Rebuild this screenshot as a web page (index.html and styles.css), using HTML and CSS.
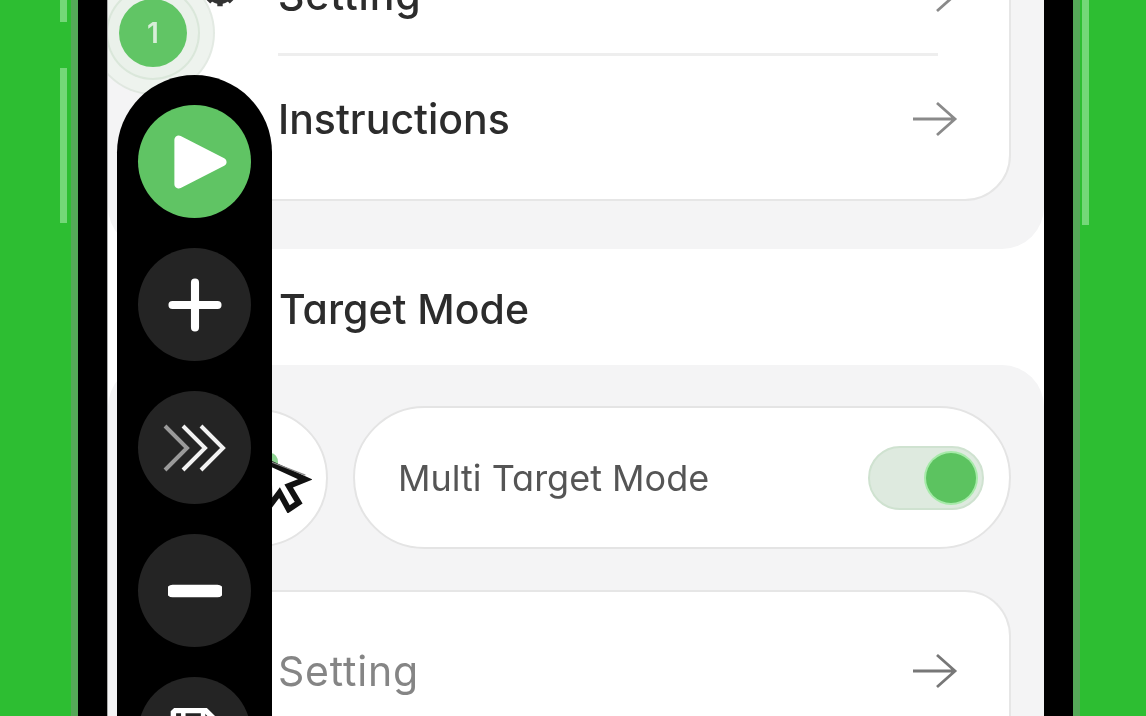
FILE: index.html
```html
<!DOCTYPE html>
<html lang="en">
<head>
<meta charset="utf-8">
<title>Target Mode</title>
<link rel="stylesheet" href="styles.css">
</head>
<body>
<div class="phone">
  <span class="side side-left-a"></span>
  <span class="side side-left-b"></span>
  <span class="side side-right"></span>
  <main class="screen">
    <section class="panel panel-top">
      <div class="card">
        <div class="row row-divided">
          <svg class="gear" viewBox="0 0 40 40"><circle cx="20" cy="20" r="12" fill="none" stroke="#333" stroke-width="7"/><path d="M20 2v8M20 30v8M2 20h8M30 20h8M7 7l6 6M27 27l6 6M33 7l-6 6M13 27l-6 6" stroke="#333" stroke-width="6"/></svg>
          <span class="label label-setting">Setting</span>
          <svg class="arrow" viewBox="0 0 46 36"><path d="M1 18h42M25 2l18 16-18 16" fill="none" stroke="#8a8a8a" stroke-width="2.8"/></svg>
        </div>
        <div class="row row-instructions">
          <span class="label">Instructions</span>
          <svg class="arrow" viewBox="0 0 46 36"><path d="M1 18h42M25 2l18 16-18 16" fill="none" stroke="#8a8a8a" stroke-width="2.8"/></svg>
        </div>
      </div>
    </section>
    <h2 class="section-title">Target Mode</h2>
    <section class="panel panel-mode">
      <div class="mode-row">
        <div class="round">
          <span class="dot"></span>
          <svg class="pointer" viewBox="0 0 60 64"><path d="M8 4l44 20-20 8 12 20-12 8-11-20-12 16z" fill="#fff" stroke="#111" stroke-width="7" stroke-linejoin="miter"/><path d="M8 2l44 17" stroke="#888" stroke-width="1.5"/></svg>
        </div>
        <div class="pill">
          <span class="pill-label">Multi Target Mode</span>
          <span class="toggle"><span class="knob"></span></span>
        </div>
      </div>
      <div class="card card-bottom">
        <div class="row">
          <span class="label label-muted label-setting">Setting</span>
          <svg class="arrow" viewBox="0 0 46 36"><path d="M1 18h42M25 2l18 16-18 16" fill="none" stroke="#777" stroke-width="2.8"/></svg>
        </div>
      </div>
    </section>

    <div class="badge"><span class="badge-num">1</span></div>

    <nav class="toolbar">
      <button class="tool tool-play">
        <svg viewBox="0 0 60 60" class="ico-play"><path d="M8 7 L53 30 L8 53 Z" fill="#fff" stroke="#fff" stroke-width="9" stroke-linejoin="round"/></svg>
      </button>
      <button class="tool">
        <svg viewBox="0 0 60 60" class="ico"><path d="M30 5v50M5 30h50" stroke="#fff" stroke-width="9" stroke-linecap="round"/></svg>
      </button>
      <button class="tool">
        <svg viewBox="0 0 66 50" class="ico-chev"><path d="M3 3l22 22-22 22" fill="none" stroke="#9a9a9a" stroke-width="4"/><path d="M21 3l22 22-22 22M39 3l22 22-22 22" fill="none" stroke="#f2f2f2" stroke-width="4"/></svg>
      </button>
      <button class="tool">
        <svg viewBox="0 0 60 60" class="ico"><path d="M5 30h50" stroke="#fff" stroke-width="14" stroke-linecap="round"/></svg>
      </button>
      <button class="tool">
        <svg viewBox="0 0 60 60" class="ico"><path d="M8 4h34l12 12v36a4 4 0 0 1-4 4H10a4 4 0 0 1-4-4V6z" fill="none" stroke="#fff" stroke-width="6"/><path d="M17 6v14h22V6M16 56V36h28v20" fill="none" stroke="#fff" stroke-width="5"/></svg>
      </button>
    </nav>
  </main>
</div>
</body>
</html>
```

FILE: styles.css
```css
* { box-sizing: border-box; }
html, body { margin: 0; height: 716px; overflow: hidden; }
body {
  background: #2dbe32;
  font-family: Inter, "Liberation Sans", sans-serif;
  font-feature-settings: "cv11" 1;
  color: #2c2c2c;
}
.phone {
  position: relative;
  width: 995px;
  height: 716px;
  margin-left: 78px;
  border-left: 29px solid #000;
  border-right: 29px solid #000;
  box-shadow: -7px 0 0 #55a858, 7px 0 0 #55a858;
}
.side { position: absolute; width: 7px; background: #74d878; }
.side-left-a { left: -47px; top: 0; height: 22px; }
.side-left-b { left: -47px; top: 68px; height: 155px; }
.side-right { right: -45px; top: 0; height: 225px; }
.screen {
  position: relative;
  height: 716px;
  overflow: hidden;
  background: #fff;
  border-left: 1px solid #aaa;
  filter: blur(.7px);
}
.panel { background: #f4f4f5; padding-left: 42px; padding-right: 33px; }
.panel-top {
  margin-top: -92px;
  padding-bottom: 48px;
  border-radius: 0 0 42px 42px;
}
.card {
  background: #fff;
  border: 2px solid #e6e6e6;
  border-radius: 46px;
  padding: 0 51px 0 126px;
}
.row {
  display: flex;
  align-items: center;
  justify-content: space-between;
  height: 146px;
  position: relative;
}
.row-divided { border-bottom: 3px solid #eee; margin-right: 20px; padding-top: 27px; }
.row-divided .arrow { margin-right: -20px; }
.row-instructions { height: 143px; padding-bottom: 17px; }
.gear { position: absolute; left: -76px; top: 62px; width: 36px; height: 36px; }
.label { font-size: 41px; line-height: 48px; font-weight: 450; }
.label-setting { letter-spacing: .8px; }
.label-muted { color: #858585; font-weight: 400; }
.arrow { width: 46px; height: 36px; flex: none; }
.section-title {
  margin: 0;
  height: 116px;
  padding: 36px 0 0 171px;
  font-size: 41px;
  line-height: 48px;
  font-weight: 450;
}
.panel-mode {
  padding-top: 41px;
  height: 352px;
  border-radius: 42px 42px 0 0;
  position: relative;
}
.mode-row {
  display: flex;
  align-items: center;
  gap: 25px;
  height: 143px;
  margin-bottom: 41px;
}
.round {
  position: relative;
  flex: none;
  width: 138px;
  height: 138px;
  margin-left: 40px;
  border-radius: 50%;
  background: #fff;
  border: 2px solid #e4e4e4;
}
.dot {
  position: absolute;
  left: 72px; top: 42px;
  width: 14px; height: 18px;
  border-radius: 50%;
  background: #8fd493;
}
.pointer { position: absolute; left: 70px; top: 48px; width: 50px; height: 54px; }
.pill {
  flex: 1;
  height: 143px;
  display: flex;
  align-items: center;
  justify-content: space-between;
  padding: 0 25px 0 43px;
  background: #fff;
  border: 2px solid #e4e4e4;
  border-radius: 72px;
}
.pill-label { font-size: 36px; line-height: 44px; color: #555; }
.toggle {
  display: flex;
  align-items: center;
  justify-content: flex-end;
  width: 116px;
  height: 64px;
  padding-right: 6px;
  border-radius: 32px;
  background: #deeadf;
  border: 2px solid #cfe2d0;
}
.knob { width: 50px; height: 50px; border-radius: 50%; background: #5cc360; box-shadow: 0 0 0 2px #a6eaa9; }
.card-bottom {
  height: 200px;
  border-bottom: 0;
  border-radius: 46px 46px 0 0;
}
.card-bottom .row { height: 158px; }
.badge {
  position: absolute;
  left: 11px;
  top: -1px;
  width: 68px;
  height: 68px;
  display: grid;
  place-items: center;
  border-radius: 50%;
  background: #61c565;
  box-shadow: 0 0 0 11px rgba(235,242,235,.9), 0 0 0 13px rgba(210,225,210,.7), 0 0 0 26px rgba(240,244,240,.85), 0 0 0 28px rgba(215,225,215,.7);
}
.badge-num { color: #d8eed9; font-size: 28px; line-height: 1; font-weight: 600; }
.toolbar {
  position: absolute;
  left: 9px;
  top: 75px;
  width: 155px;
  height: 760px;
  padding-top: 30px;
  display: flex;
  flex-direction: column;
  align-items: center;
  gap: 30px;
  background: #000;
  border-radius: 78px 78px 0 0;
}
.tool {
  flex: none;
  width: 113px;
  height: 113px;
  padding: 0;
  border: 0;
  border-radius: 50%;
  background: #242424;
  display: grid;
  place-items: center;
}
.tool-play { background: #60c464; }
.ico-play { width: 58px; height: 58px; margin-left: 10px; }
.ico { width: 54px; height: 54px; }
.ico-chev { width: 66px; height: 50px; }
```
